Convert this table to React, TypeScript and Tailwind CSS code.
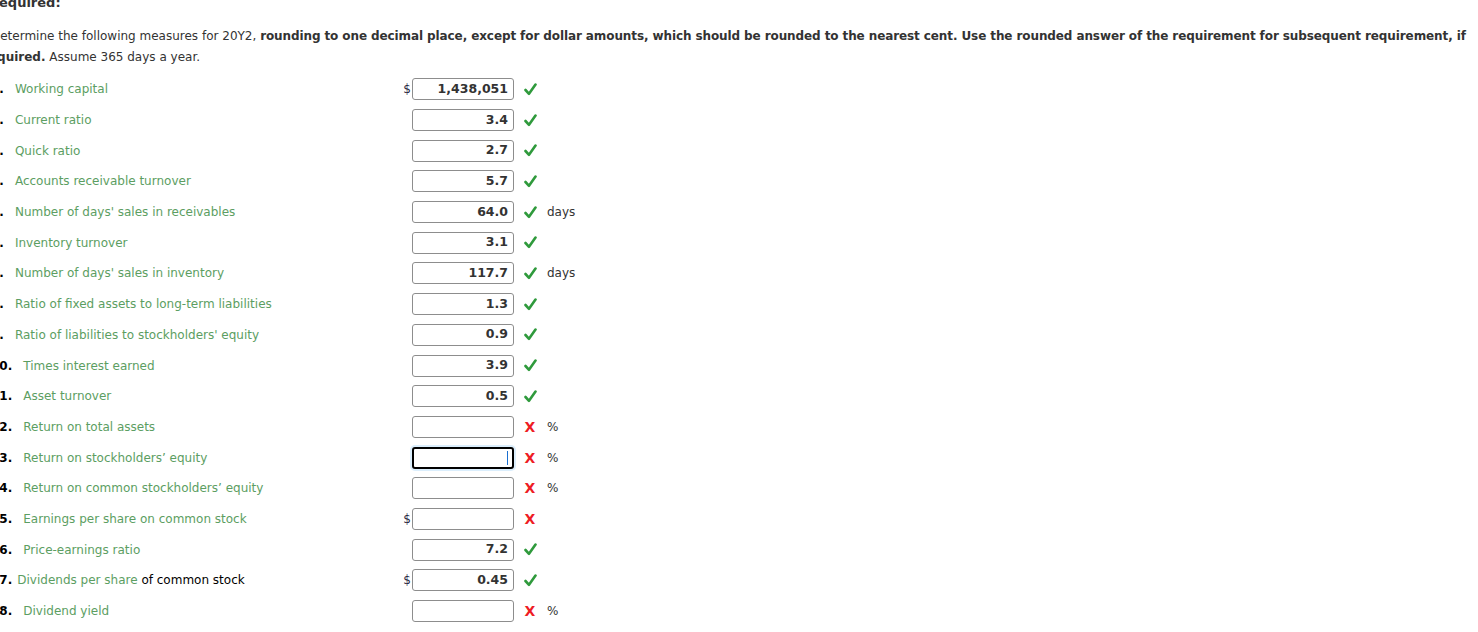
import React from "react";

// =====================================================
// DATA
// =====================================================

type Mark = "ok" | "bad";

interface Row {
  n: number;
  label: string;
  extra?: string;
  dollar?: boolean;
  value: string;
  mark: Mark;
  unit?: string;
  focused?: boolean;
  tight?: boolean;
}

const rows: Row[] = [
  { n: 1, label: "Working capital", dollar: true, value: "1,438,051", mark: "ok" },
  { n: 2, label: "Current ratio", value: "3.4", mark: "ok" },
  { n: 3, label: "Quick ratio", value: "2.7", mark: "ok" },
  { n: 4, label: "Accounts receivable turnover", value: "5.7", mark: "ok" },
  { n: 5, label: "Number of days' sales in receivables", value: "64.0", mark: "ok", unit: "days" },
  { n: 6, label: "Inventory turnover", value: "3.1", mark: "ok" },
  { n: 7, label: "Number of days' sales in inventory", value: "117.7", mark: "ok", unit: "days" },
  { n: 8, label: "Ratio of fixed assets to long-term liabilities", value: "1.3", mark: "ok" },
  { n: 9, label: "Ratio of liabilities to stockholders' equity", value: "0.9", mark: "ok" },
  { n: 10, label: "Times interest earned", value: "3.9", mark: "ok" },
  { n: 11, label: "Asset turnover", value: "0.5", mark: "ok" },
  { n: 12, label: "Return on total assets", value: "", mark: "bad", unit: "%" },
  { n: 13, label: "Return on stockholders\u2019 equity", value: "", mark: "bad", unit: "%", focused: true },
  { n: 14, label: "Return on common stockholders\u2019 equity", value: "", mark: "bad", unit: "%" },
  { n: 15, label: "Earnings per share on common stock", dollar: true, value: "", mark: "bad" },
  { n: 16, label: "Price-earnings ratio", value: "7.2", mark: "ok" },
  { n: 17, label: "Dividends per share", extra: " of common stock", dollar: true, value: "0.45", mark: "ok", tight: true },
  { n: 18, label: "Dividend yield", value: "", mark: "bad", unit: "%" },
];

// =====================================================
// PARTS
// =====================================================

function Check() {
  return (
    <svg width="13" height="13" viewBox="0 0 13 13">
      <path
        d="M1.5 7 L5 10.8 L11.5 1.5"
        fill="none"
        stroke="#2f9a3c"
        strokeWidth="2.6"
        strokeLinecap="round"
        strokeLinejoin="round"
      />
    </svg>
  );
}

function Cross() {
  return (
    <span className="text-[14px] font-bold leading-none text-[#ee1c24]">X</span>
  );
}

function AnswerRow({ row }: { row: Row }) {
  return (
    <div className="flex h-[30.7px] items-center">
      <div className="w-[409px] whitespace-nowrap">
        <span className="font-bold text-black">{row.n}.</span>
        <span className={row.tight ? "ml-[5px]" : "ml-[11px]"}>
          <span className="text-[#5c9e62]">{row.label}</span>
          {row.extra && <span className="text-black">{row.extra}</span>}
        </span>
      </div>

      <div className="w-[12px] pr-[1px] text-right text-[#2a2a44]">
        {row.dollar ? "$" : ""}
      </div>

      {row.focused ? (
        <div className="flex h-[22px] w-[102px] items-center justify-end rounded-[3px] border-2 border-black pr-[4px] shadow-[0_0_0_2px_#dbeefc]">
          <span className="h-[14px] w-[1px] bg-[#1a6fd0]" />
        </div>
      ) : (
        <div className="flex h-[22px] w-[102px] items-center justify-end rounded-[3px] border border-[#8d8d8d] pr-[5px] text-[12.5px] font-bold text-[#333]">
          {row.value}
        </div>
      )}

      <div className="ml-[9px] flex w-[14px] items-center justify-center">
        {row.mark === "ok" ? <Check /> : <Cross />}
      </div>

      {row.unit && <div className="ml-[10px] text-[#333]">{row.unit}</div>}
    </div>
  );
}

// =====================================================
// PAGE
// =====================================================

export default function App() {
  return (
    <main
      className="h-[632px] w-[1478px] overflow-hidden bg-white text-[12px] text-[#333]"
      style={{ fontFamily: '"DejaVu Sans", Verdana, sans-serif' }}
    >
      <div className="ml-[-9px] mt-[-6px]">
        <div className="ml-[-2px] text-[13px] font-bold leading-[18px] text-[#333]">
          Required:
        </div>

        <div className="mt-[14px] leading-[21px] whitespace-nowrap">
          Determine the following measures for 20Y2,{" "}
          <b className="tracking-[-0.1px]">
            rounding to one decimal place, except for dollar amounts, which
            should be rounded to the nearest cent. Use the rounded answer of
            the requirement for subsequent requirement, if
          </b>
          <br />
          <b className="ml-[-8px]">required.</b> Assume 365 days a year.
        </div>

        <div className="mt-[6px]">
          {rows.map((row) => (
            <AnswerRow key={row.n} row={row} />
          ))}
        </div>
      </div>
    </main>
  );
}
